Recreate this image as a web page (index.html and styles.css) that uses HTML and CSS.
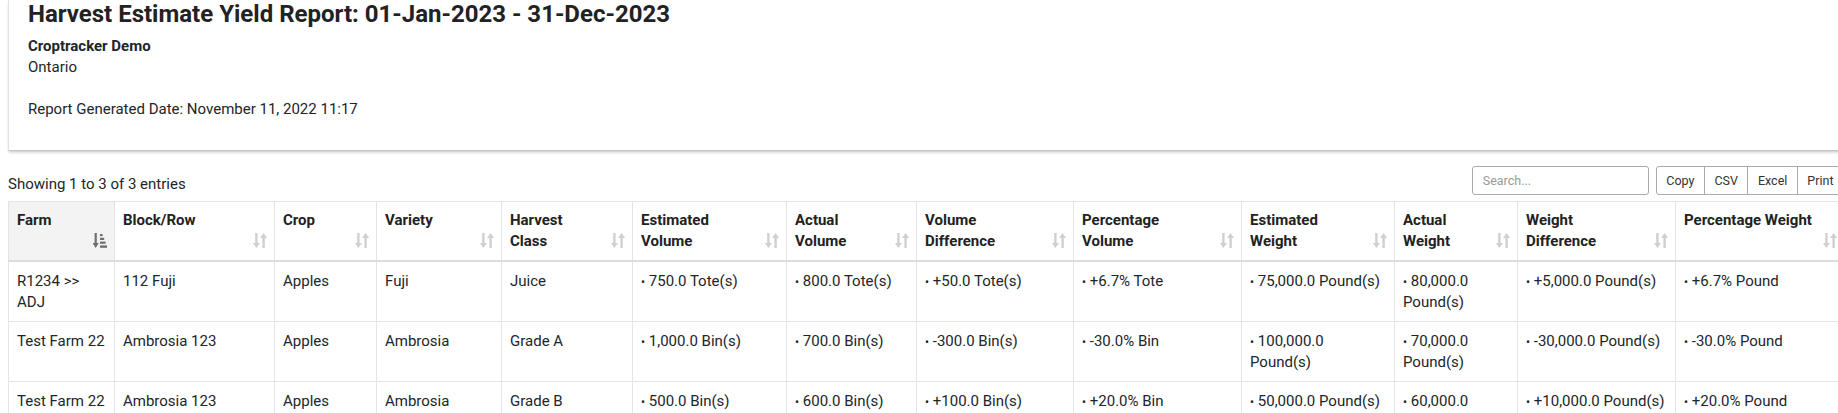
FILE: index.html
```html
<!DOCTYPE html>
<html lang="en">
<head>
<meta charset="utf-8">
<title>Harvest Estimate Yield Report</title>
<link rel="stylesheet" href="styles.css">
</head>
<body>
<div class="page">
  <section class="report-card">
    <h1 class="report-title">Harvest Estimate Yield Report: 01-Jan-2023 - 31-Dec-2023</h1>
    <div class="company">
      <div class="company-name">Croptracker Demo</div>
      <div class="company-region">Ontario</div>
    </div>
    <div class="generated">Report Generated Date: November 11, 2022 11:17</div>
  </section>

  <div class="toolbar">
    <div class="info">Showing 1 to 3 of 3 entries</div>
    <div class="controls">
      <input class="search" type="text" placeholder="Search...">
      <div class="btn-group">
        <button class="btn btn-first">Copy</button>
        <button class="btn">CSV</button>
        <button class="btn">Excel</button>
        <button class="btn">Print</button>
      </div>
    </div>
  </div>

  <table class="data-table">
    <colgroup>
      <col class="c-farm"><col class="c-block"><col class="c-crop"><col class="c-variety"><col class="c-class">
      <col class="c-estvol"><col class="c-actvol"><col class="c-voldiff"><col class="c-pctvol">
      <col class="c-estwt"><col class="c-actwt"><col class="c-wtdiff"><col class="c-pctwt">
    </colgroup>
    <thead>
      <tr>
        <th class="sorted"><div class="th-inner"><span class="th-label">Farm</span>
          <svg class="sort-icon active" viewBox="0 0 14 15"><path d="M1.6 0h2.2v10H5.8L2.7 15 -0.4 10h2z"/><rect x="7" y="1" width="2.6" height="2.2"/><rect x="7" y="4.8" width="4.2" height="2.2"/><rect x="7" y="8.6" width="5.6" height="2.2"/><rect x="7" y="12.4" width="7" height="2.4"/></svg></div></th>
        <th><div class="th-inner"><span class="th-label">Block/Row</span><svg class="sort-icon" viewBox="0 0 14 15"><path d="M2.2 0h2.4v10H7L3.4 15 -0.2 10h2.4z"/><path d="M10.6 0L14.2 5h-2.4v10H9.4V5H7z"/></svg></div></th>
        <th><div class="th-inner"><span class="th-label">Crop</span><svg class="sort-icon" viewBox="0 0 14 15"><path d="M2.2 0h2.4v10H7L3.4 15 -0.2 10h2.4z"/><path d="M10.6 0L14.2 5h-2.4v10H9.4V5H7z"/></svg></div></th>
        <th><div class="th-inner"><span class="th-label">Variety</span><svg class="sort-icon" viewBox="0 0 14 15"><path d="M2.2 0h2.4v10H7L3.4 15 -0.2 10h2.4z"/><path d="M10.6 0L14.2 5h-2.4v10H9.4V5H7z"/></svg></div></th>
        <th><div class="th-inner"><span class="th-label">Harvest Class</span><svg class="sort-icon" viewBox="0 0 14 15"><path d="M2.2 0h2.4v10H7L3.4 15 -0.2 10h2.4z"/><path d="M10.6 0L14.2 5h-2.4v10H9.4V5H7z"/></svg></div></th>
        <th><div class="th-inner"><span class="th-label">Estimated Volume</span><svg class="sort-icon" viewBox="0 0 14 15"><path d="M2.2 0h2.4v10H7L3.4 15 -0.2 10h2.4z"/><path d="M10.6 0L14.2 5h-2.4v10H9.4V5H7z"/></svg></div></th>
        <th><div class="th-inner"><span class="th-label">Actual Volume</span><svg class="sort-icon" viewBox="0 0 14 15"><path d="M2.2 0h2.4v10H7L3.4 15 -0.2 10h2.4z"/><path d="M10.6 0L14.2 5h-2.4v10H9.4V5H7z"/></svg></div></th>
        <th><div class="th-inner"><span class="th-label">Volume Difference</span><svg class="sort-icon" viewBox="0 0 14 15"><path d="M2.2 0h2.4v10H7L3.4 15 -0.2 10h2.4z"/><path d="M10.6 0L14.2 5h-2.4v10H9.4V5H7z"/></svg></div></th>
        <th><div class="th-inner"><span class="th-label">Percentage Volume</span><svg class="sort-icon" viewBox="0 0 14 15"><path d="M2.2 0h2.4v10H7L3.4 15 -0.2 10h2.4z"/><path d="M10.6 0L14.2 5h-2.4v10H9.4V5H7z"/></svg></div></th>
        <th><div class="th-inner"><span class="th-label">Estimated Weight</span><svg class="sort-icon" viewBox="0 0 14 15"><path d="M2.2 0h2.4v10H7L3.4 15 -0.2 10h2.4z"/><path d="M10.6 0L14.2 5h-2.4v10H9.4V5H7z"/></svg></div></th>
        <th><div class="th-inner"><span class="th-label">Actual Weight</span><svg class="sort-icon" viewBox="0 0 14 15"><path d="M2.2 0h2.4v10H7L3.4 15 -0.2 10h2.4z"/><path d="M10.6 0L14.2 5h-2.4v10H9.4V5H7z"/></svg></div></th>
        <th><div class="th-inner"><span class="th-label">Weight Difference</span><svg class="sort-icon" viewBox="0 0 14 15"><path d="M2.2 0h2.4v10H7L3.4 15 -0.2 10h2.4z"/><path d="M10.6 0L14.2 5h-2.4v10H9.4V5H7z"/></svg></div></th>
        <th><div class="th-inner"><span class="th-label">Percentage Weight</span><svg class="sort-icon" viewBox="0 0 14 15"><path d="M2.2 0h2.4v10H7L3.4 15 -0.2 10h2.4z"/><path d="M10.6 0L14.2 5h-2.4v10H9.4V5H7z"/></svg></div></th>
      </tr>
    </thead>
    <tbody>
      <tr>
        <td>R1234 &gt;&gt; ADJ</td>
        <td>112 Fuji</td>
        <td>Apples</td>
        <td>Fuji</td>
        <td>Juice</td>
        <td><span class="dot">•</span> 750.0 Tote(s)</td>
        <td><span class="dot">•</span> 800.0 Tote(s)</td>
        <td><span class="dot">•</span> +50.0 Tote(s)</td>
        <td><span class="dot">•</span> +6.7% Tote</td>
        <td><span class="dot">•</span> 75,000.0 Pound(s)</td>
        <td><span class="dot">•</span> 80,000.0 Pound(s)</td>
        <td><span class="dot">•</span> +5,000.0 Pound(s)</td>
        <td><span class="dot">•</span> +6.7% Pound</td>
      </tr>
      <tr>
        <td>Test Farm 22</td>
        <td>Ambrosia 123</td>
        <td>Apples</td>
        <td>Ambrosia</td>
        <td>Grade A</td>
        <td><span class="dot">•</span> 1,000.0 Bin(s)</td>
        <td><span class="dot">•</span> 700.0 Bin(s)</td>
        <td><span class="dot">•</span> -300.0 Bin(s)</td>
        <td><span class="dot">•</span> -30.0% Bin</td>
        <td><span class="dot">•</span> 100,000.0 Pound(s)</td>
        <td><span class="dot">•</span> 70,000.0 Pound(s)</td>
        <td><span class="dot">•</span> -30,000.0 Pound(s)</td>
        <td><span class="dot">•</span> -30.0% Pound</td>
      </tr>
      <tr>
        <td>Test Farm 22</td>
        <td>Ambrosia 123</td>
        <td>Apples</td>
        <td>Ambrosia</td>
        <td>Grade B</td>
        <td><span class="dot">•</span> 500.0 Bin(s)</td>
        <td><span class="dot">•</span> 600.0 Bin(s)</td>
        <td><span class="dot">•</span> +100.0 Bin(s)</td>
        <td><span class="dot">•</span> +20.0% Bin</td>
        <td><span class="dot">•</span> 50,000.0 Pound(s)</td>
        <td><span class="dot">•</span> 60,000.0 Pound(s)</td>
        <td><span class="dot">•</span> +10,000.0 Pound(s)</td>
        <td><span class="dot">•</span> +20.0% Pound</td>
      </tr>
    </tbody>
  </table>
</div>
</body>
</html>
```
FILE: styles.css
```css
html, body {
  margin: 0;
  padding: 0;
  background: #ffffff;
}
body {
  overflow: hidden;
  font-family: Roboto, "Liberation Sans", sans-serif;
  font-size: 15px;
  line-height: 21px;
  color: #212529;
}
.page {
  width: 1836px;
  padding-left: 8px;
}

/* report header card */
.report-card {
  background: #fff;
  border-left: 1px solid #e2e2e2;
  border-bottom: 1px solid #c4c4c4;
  box-shadow: 0 2px 3px -1px rgba(0, 0, 0, 0.25);
  padding: 0 20px 30px 19px;
}
.report-title {
  margin: 0;
  font-size: 24px;
  line-height: 29px;
  font-weight: 700;
  color: #222;
}
.company {
  margin-top: 7px;
}
.company-name {
  font-weight: 700;
}
.generated {
  margin-top: 21px;
}

/* toolbar */
.toolbar {
  display: flex;
  justify-content: space-between;
  align-items: flex-end;
  margin-top: 15px;
}
.info {
  line-height: 21px;
}
.controls {
  display: flex;
  align-items: center;
  gap: 7px;
}
.search {
  box-sizing: border-box;
  width: 177px;
  height: 29px;
  margin: 0;
  padding: 0 10px;
  border: 1px solid #aaaaaa;
  border-radius: 3px;
  font-family: Roboto, "Liberation Sans", sans-serif;
  font-size: 12.5px;
  color: #333;
  outline: none;
}
.search::placeholder {
  color: #9a9a9a;
}
.btn-group {
  display: flex;
}
.btn {
  box-sizing: border-box;
  height: 29px;
  margin: 0 0 0 -1px;
  padding: 0 9.5px;
  border: 1px solid #aaaaaa;
  border-radius: 0;
  background: #fff;
  font-family: Roboto, "Liberation Sans", sans-serif;
  font-size: 12.5px;
  color: #333;
}
.btn-first {
  margin-left: 0;
  border-radius: 3px 0 0 3px;
}

/* table */
.data-table {
  margin-top: 6px;
  width: 1836px;
  table-layout: fixed;
  border-collapse: collapse;
  border: 1px solid #e4e4e4;
}
.c-farm { width: 106px; }
.c-block { width: 160px; }
.c-crop { width: 102px; }
.c-variety { width: 125px; }
.c-class { width: 131px; }
.c-estvol { width: 154px; }
.c-actvol { width: 130px; }
.c-voldiff { width: 157px; }
.c-pctvol { width: 168px; }
.c-estwt { width: 153px; }
.c-actwt { width: 123px; }
.c-wtdiff { width: 158px; }
.c-pctwt { width: 169px; }

.data-table th {
  padding: 8px 8px 8px 8px;
  border: 1px solid #e4e4e4;
  border-bottom: 2px solid #dcdcdc;
  text-align: left;
  vertical-align: top;
  font-weight: 700;
  color: #222;
  background: #fff;
}
.data-table th.sorted {
  background: #f3f3f3;
}
.th-inner {
  display: flex;
  justify-content: space-between;
  align-items: flex-start;
  gap: 8px;
  min-height: 42px;
}
.th-label {
  flex: 1 1 auto;
  min-width: 0;
}
.sort-icon {
  flex: none;
  align-self: flex-end;
  width: 14px;
  height: 15px;
  margin-bottom: 4px;
  margin-right: -1px;
  fill: #d0d0d0;
}
.sort-icon.active {
  fill: #6f6f6f;
}
.data-table td {
  padding: 8.5px 8px;
  border: 1px solid #e4e4e4;
  vertical-align: top;
  color: #212529;
}
.dot {
  font-size: 12px;
  line-height: 1;
}
```
